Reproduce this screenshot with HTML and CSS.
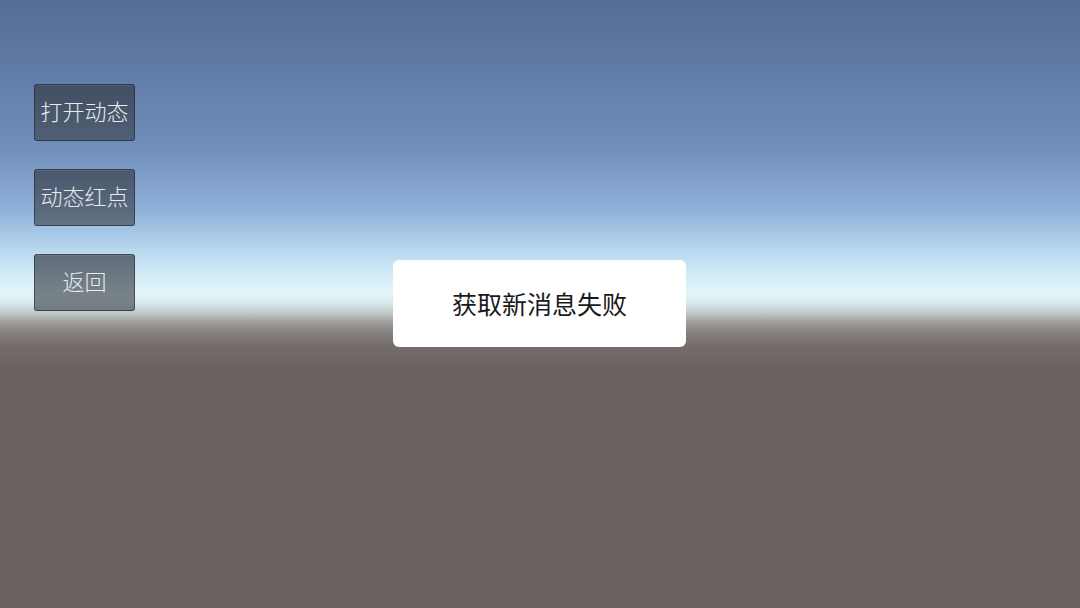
FILE: index.html
```html
<!DOCTYPE html>
<html lang="zh-CN">
<head>
    <meta charset="UTF-8">
    <meta name="viewport" content="width=device-width, initial-scale=1.0">
    <title>动态</title>
    <link rel="stylesheet" href="styles.css">
</head>
<body>
    <div class="scene">
        <div class="menu">
            <button class="menu-btn">打开动态</button>
            <button class="menu-btn">动态红点</button>
            <button class="menu-btn">返回</button>
        </div>

        <!-- toast shown when the feed request fails -->
        <div class="toast">获取新消息失败</div>
    </div>
</body>
</html>
```

FILE: styles.css
```css
body {
    margin: 0;
    padding: 0;
    font-family: "Noto Sans CJK SC", "Noto Sans", sans-serif;
    overflow: hidden;
}

/* default skybox: blue sky fading to a light horizon, grey ground below */
.scene {
    position: relative;
    width: 1080px;
    height: 608px;
    background: linear-gradient(to bottom,
        #566d96 0px,
        #5e79a3 60px,
        #718fbb 150px,
        #8fb0d8 210px,
        #b8d8ef 250px,
        #d6eef7 280px,
        #e2f4f8 294px,
        #d9e9ec 303px,
        #bfc8c8 313px,
        #9d9c9a 323px,
        #86807d 333px,
        #756d69 345px,
        #6b635f 365px,
        #6b635f 608px);
}

.menu {
    display: flex;
    flex-direction: column;
    gap: 28px;
    padding: 84px 0 0 34px;
}

.menu-btn {
    width: 101px;
    height: 57px;
    padding: 0 0 5px;
    border: 1px solid rgba(30, 34, 42, 0.55);
    border-radius: 3px;
    background: linear-gradient(to bottom, rgba(50, 56, 66, 0.68), rgba(62, 68, 76, 0.62));
    box-shadow: inset 0 1px 0 rgba(255, 255, 255, 0.08);
    color: #e8eaec;
    font-family: "Noto Sans CJK SC", "Noto Sans", sans-serif;
    font-size: 22px;
    font-weight: 300;
    cursor: pointer;
}

.toast {
    position: absolute;
    left: 393px;
    top: 260px;
    width: 293px;
    height: 87px;
    display: flex;
    align-items: center;
    justify-content: center;
    padding-bottom: 2px;
    box-sizing: border-box;
    background-color: #fff;
    border-radius: 6px;
    color: #1a1a1a;
    font-size: 25px;
}
```
